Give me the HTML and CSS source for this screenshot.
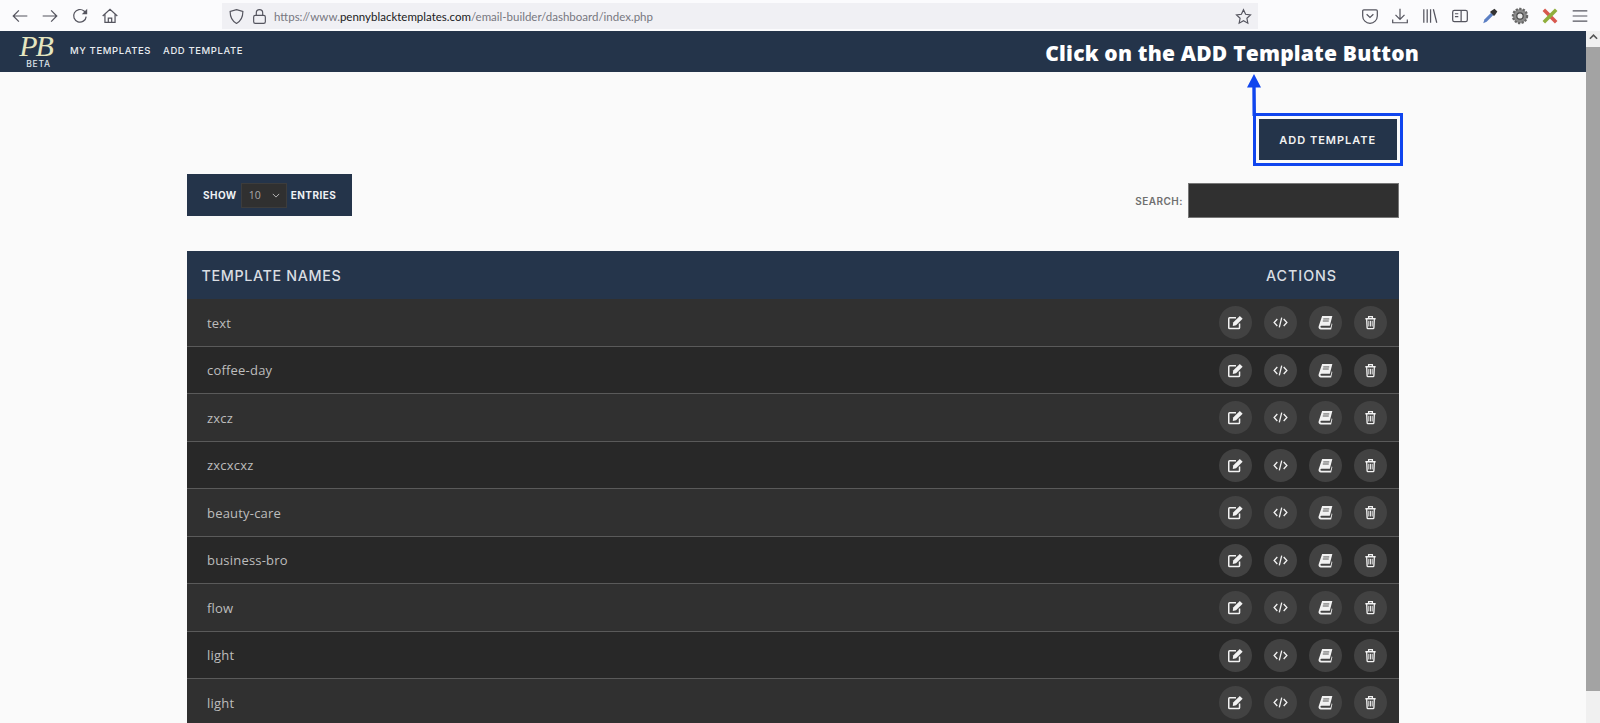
FILE: index.html
```html
<!DOCTYPE html>
<html lang="en">
<head>
<meta charset="utf-8">
<title>Penny Black Templates</title>
<link rel="stylesheet" href="styles.css">
</head>
<body>
<svg class="sprites" aria-hidden="true">
  <symbol id="i-edit" viewBox="0 0 16 16"><path d="M12.300 9V13.500a1 1 0 0 1-1 1H1.800a1 1 0 0 1-1-1V4a1 1 0 0 1 1-1H8.500" fill="none" stroke="currentColor" stroke-width="1.600"/><path d="M5.500 8 12.600 1l3 3-7 7-3.500.6z" fill="currentColor"/></symbol>
  <symbol id="i-code" viewBox="0 0 16 16"><path d="M4.600 4.200 1.200 8l3.400 3.800M11.400 4.200 14.800 8l-3.400 3.800M9.300 2.800 6.700 13.200" fill="none" stroke="currentColor" stroke-width="1.400"/></symbol>
  <symbol id="i-book" viewBox="0 0 16 16"><path d="M4.400 1H15.300L12.600 11.400H3.700a1.100 1.100 0 0 0 0 2.300h9.700l1.300-5 .6 1-1.300 5.800H3.400A2.600 2.600 0 0 1 .8 11.800z" fill="currentColor"/><path d="M5.600 4.200h6.400M5.100 6.400h6.400" stroke="#3f3f3f" stroke-width=".9"/></symbol>
  <symbol id="i-trash" viewBox="0 0 16 16"><path d="M2.500 4h11M6 3.600V1.800h4v1.800M3.900 4.400l.5 9.300a.9.9 0 0 0 .9.800h5.400a.9.9 0 0 0 .9-.8l.5-9.300" fill="none" stroke="currentColor" stroke-width="1.400"/><path d="M6.200 6.200v6M8 6.200v6M9.800 6.200v6" stroke="currentColor" stroke-width="1"/></symbol>
</svg>

<header class="toolbar">
  <div class="tool-group">
    <svg class="tool" viewBox="0 0 16 16"><path d="M14.500 8H2M7 3 2 8l5 5"/></svg>
    <svg class="tool" viewBox="0 0 16 16"><path d="M1.500 8H14M9 3l5 5-5 5"/></svg>
    <svg class="tool" viewBox="0 0 16 16"><path d="M13.500 8.500A5.600 5.600 0 1 1 11.600 3.600L13.500 5.400"/><path class="solid" d="M14.400 1.600v4.800H9.600z"/></svg>
    <svg class="tool" viewBox="0 0 16 16"><path d="M1.500 8 8 2l6.500 6M3.500 6.500v7.200h9V6.500M6.500 13.700V9.800h3v3.900"/></svg>
  </div>
  <div class="urlbar">
    <svg class="tool small" viewBox="0 0 16 16"><path d="M8 1.500 14 3.300c0 5.500-1.800 9-6 11.200-4.200-2.200-6-5.700-6-11.200z"/></svg>
    <svg class="tool small" viewBox="0 0 16 16"><rect x="2.500" y="7" width="11" height="7.500" rx="1.500"/><path d="M5 7V4.500a3 3 0 0 1 6 0V7"/></svg>
    <span class="url">https://www.<b>pennyblacktemplates.com</b>/email-builder/dashboard/index.php</span>
    <svg class="tool star" viewBox="0 0 16 16"><path d="m8 1.600 2 4.300 4.600.6-3.400 3.200.9 4.600L8 12l-4.100 2.300.9-4.600L1.400 6.500 6 5.900z"/></svg>
  </div>
  <div class="tool-group right">
    <svg class="tool" viewBox="0 0 16 16"><path d="M2.500 2.500h11a1 1 0 0 1 1 1V8a6.500 6.500 0 0 1-13 0V3.500a1 1 0 0 1 1-1z"/><path d="M5 6.500 8 9.300l3-2.800"/></svg>
    <svg class="tool" viewBox="0 0 16 16"><path d="M8 1.500v9M4 7l4 4 4-4M1.500 11v3h13v-3"/></svg>
    <svg class="tool" viewBox="0 0 16 16"><path d="M2.500 2v12M5.500 2v12M8.500 2v12M11 2l3 12"/></svg>
    <svg class="tool" viewBox="0 0 16 16"><rect x="1.500" y="3" width="13" height="10" rx="1.500"/><path d="M9 3v10M3.500 6h3M3.500 8.500h3"/></svg>
    <svg class="addon" viewBox="0 0 16 16"><path d="M2 14.500 3 11l6-6 2 2-6 6z" fill="#5b7fc4"/><path d="M9 3.500 12 1.500l2.500 2.500-2 3-1 1L8 4.500z" fill="#333"/></svg>
    <svg class="addon" viewBox="0 0 16 16"><circle cx="8" cy="8" r="6.300" fill="#8a8a8a" stroke="#666" stroke-dasharray="2 1.200" stroke-width="2"/><circle cx="8" cy="8" r="2.800" fill="#e8e8e8" stroke="#444"/></svg>
    <svg class="addon" viewBox="0 0 16 16"><path d="M2.500 2.500 13.500 13.500" stroke="#d8584e" stroke-width="3.200"/><path d="M13.500 2.500 2.500 13.500" stroke="#8fae3c" stroke-width="3.200"/></svg>
    <svg class="tool" viewBox="0 0 16 16"><path d="M1.500 3.500h13M1.500 8h13M1.500 12.500h13"/></svg>
  </div>
</header>

<div class="viewport">
  <div class="page">
    <nav class="nav">
      <div class="brand">
        <span class="brand-mark">PB</span>
        <span class="brand-tag">BETA</span>
      </div>
      <a class="nav-link">MY TEMPLATES</a>
      <a class="nav-link">ADD TEMPLATE</a>
      <h1 class="headline">Click on the ADD Template Button</h1>
    </nav>

    <main class="content">
      <div class="action-row">
        <div class="callout">
          <svg class="callout-arrow" viewBox="0 0 16 42"><path d="M8 0 15 13.500H9.700L10 42H6.500L6.300 13.500H1z"/></svg>
          <button class="add-btn">ADD TEMPLATE</button>
        </div>
      </div>

      <div class="controls">
        <div class="length">
          <span>SHOW</span>
          <span class="select">10<svg class="chev" viewBox="0 0 10 6"><path d="M1 1l4 4 4-4"/></svg></span>
          <span>ENTRIES</span>
        </div>
        <label class="search">SEARCH:<input class="search-input" type="text"></label>
      </div>

      <section class="table">
        <div class="thead">
          <span>TEMPLATE NAMES</span>
          <span class="th-actions">ACTIONS</span>
        </div>

        <div class="row"><span class="name">text</span><div class="actions"><span class="act"><svg><use href="#i-edit"/></svg></span><span class="act"><svg><use href="#i-code"/></svg></span><span class="act"><svg><use href="#i-book"/></svg></span><span class="act"><svg><use href="#i-trash"/></svg></span></div></div>
        <div class="row"><span class="name">coffee-day</span><div class="actions"><span class="act"><svg><use href="#i-edit"/></svg></span><span class="act"><svg><use href="#i-code"/></svg></span><span class="act"><svg><use href="#i-book"/></svg></span><span class="act"><svg><use href="#i-trash"/></svg></span></div></div>
        <div class="row"><span class="name">zxcz</span><div class="actions"><span class="act"><svg><use href="#i-edit"/></svg></span><span class="act"><svg><use href="#i-code"/></svg></span><span class="act"><svg><use href="#i-book"/></svg></span><span class="act"><svg><use href="#i-trash"/></svg></span></div></div>
        <div class="row"><span class="name">zxcxcxz</span><div class="actions"><span class="act"><svg><use href="#i-edit"/></svg></span><span class="act"><svg><use href="#i-code"/></svg></span><span class="act"><svg><use href="#i-book"/></svg></span><span class="act"><svg><use href="#i-trash"/></svg></span></div></div>
        <div class="row"><span class="name">beauty-care</span><div class="actions"><span class="act"><svg><use href="#i-edit"/></svg></span><span class="act"><svg><use href="#i-code"/></svg></span><span class="act"><svg><use href="#i-book"/></svg></span><span class="act"><svg><use href="#i-trash"/></svg></span></div></div>
        <div class="row"><span class="name">business-bro</span><div class="actions"><span class="act"><svg><use href="#i-edit"/></svg></span><span class="act"><svg><use href="#i-code"/></svg></span><span class="act"><svg><use href="#i-book"/></svg></span><span class="act"><svg><use href="#i-trash"/></svg></span></div></div>
        <div class="row"><span class="name">flow</span><div class="actions"><span class="act"><svg><use href="#i-edit"/></svg></span><span class="act"><svg><use href="#i-code"/></svg></span><span class="act"><svg><use href="#i-book"/></svg></span><span class="act"><svg><use href="#i-trash"/></svg></span></div></div>
        <div class="row"><span class="name">light</span><div class="actions"><span class="act"><svg><use href="#i-edit"/></svg></span><span class="act"><svg><use href="#i-code"/></svg></span><span class="act"><svg><use href="#i-book"/></svg></span><span class="act"><svg><use href="#i-trash"/></svg></span></div></div>
        <div class="row"><span class="name">light</span><div class="actions"><span class="act"><svg><use href="#i-edit"/></svg></span><span class="act"><svg><use href="#i-code"/></svg></span><span class="act"><svg><use href="#i-book"/></svg></span><span class="act"><svg><use href="#i-trash"/></svg></span></div></div>
      </section>
    </main>
  </div>
  <div class="scrollbar">
    <svg class="scroll-up" viewBox="0 0 10 6"><path d="M1 5l4-4 4 4"/></svg>
    <div class="thumb"></div>
  </div>
</div>
</body>
</html>
```

FILE: styles.css
```css
* { box-sizing: border-box; }
html, body { margin: 0; height: 723px; overflow: hidden; }
body { background: #fafafa; font-family: "Open Sans", sans-serif; }
.sprites { display: none; }

/* browser chrome */
.toolbar { height: 31px; background: #fbfbfd; display: flex; align-items: center; padding: 3px 0 2px 11px; }
.tool-group { display: flex; align-items: center; gap: 12px; }
.tool-group.right { gap: 12px; margin-left: 103px; }
.tool { width: 18px; height: 18px; fill: none; stroke: #55555f; stroke-width: 1.1; flex: none; }
.tool .solid { fill: #55555f; stroke: none; }
.tool.small { width: 17px; height: 17px; }
.addon { width: 18px; height: 18px; flex: none; }
.urlbar { width: 1036px; height: 26px; margin-left: 103px; background: #f0f0f4; display: flex; align-items: center; gap: 6px; padding: 0 6px; }
.url { font: 11.5px Lato, sans-serif; color: #77777f; flex: 1; white-space: nowrap; }
.url b { font-weight: 400; color: #1a1a22; }
.star { width: 17px; height: 17px; }

/* page */
.viewport { display: flex; height: 692px; }
.page { width: 1586px; flex: none; }
.scrollbar { width: 14px; background: #f0f0f0; display: flex; flex-direction: column; align-items: center; }
.scroll-up { width: 9px; height: 6px; margin-top: 3px; fill: none; stroke: #555; stroke-width: 1.8; flex: none; }
.thumb { width: 14px; height: 644px; margin-top: 7px; background: #a3a3a3; }

.nav { height: 41px; background: #24344a; display: flex; align-items: center; padding: 0 14px; color: #e8e8e8; }
.brand { width: 43px; display: flex; flex-direction: column; align-items: center; margin-right: 13px; }
.brand-mark { font: italic 30px/26px "Liberation Serif", serif; color: #e6e6c0; letter-spacing: -2px; }
.brand-tag { font: 500 8.5px/11px Inter, sans-serif; letter-spacing: 0.8px; color: #dfe3e8; margin-left: 6px; }
.nav-link { font: 500 9.5px Inter, sans-serif; letter-spacing: 0.6px; margin-right: 12px; white-space: nowrap; color: #e8ecf0; position: relative; top: -1px; }
.headline { margin: 0 153px 0 auto; font: 800 21px "Open Sans", sans-serif; letter-spacing: 0.2px; color: #fff; white-space: nowrap; position: relative; top: 1px; }

.content { padding: 0 187px; }
.action-row { display: flex; justify-content: flex-end; padding-top: 41px; margin-right: -4px; }
.callout { position: relative; border: 3.5px solid #0f45ee; padding: 3px; background: #fafafa; }
.callout-arrow { position: absolute; left: -9.5px; bottom: 100%; width: 16px; height: 42px; fill: #0f45ee; }
.add-btn { display: block; width: 138.5px; height: 41px; border: 0; background: #24344a; color: #f2f2f2; font: 600 11px Inter, sans-serif; letter-spacing: 1px; padding: 0; }

.controls { display: flex; justify-content: space-between; align-items: flex-start; margin-top: 8px; }
.length { width: 165px; height: 42px; background: #24344a; color: #eef1f4; display: flex; align-items: center; gap: 4px; padding-left: 16px; font: 700 10px Inter, sans-serif; letter-spacing: 0.45px; }
.select { width: 46px; height: 25px; background: #303030; border: 1px solid #3c3c3c; color: #aaa; font: 400 10.5px "Open Sans", sans-serif; letter-spacing: 0; display: flex; align-items: center; justify-content: space-between; padding: 0 6px 0 7px; }
.chev { width: 8px; height: 5px; fill: none; stroke: #bbb; stroke-width: 1.2; }
.search { display: flex; align-items: center; gap: 5px; margin-top: 9px; font: 600 10px Inter, sans-serif; letter-spacing: 0.5px; color: #6f6f6f; }
.search-input { width: 211px; height: 35px; background: #303030; border: 1px solid #777; padding: 0; }

.table { margin-top: 33px; }
.thead { height: 48px; background: #25354b; color: #d9dde2; display: flex; align-items: center; justify-content: space-between; padding: 0 62px 0 14.5px; font: 500 14.3px Inter, sans-serif; letter-spacing: 0.65px; }
.th-actions { letter-spacing: 0.95px; }
.row { height: 47.5px; background: #303030; border-bottom: 1px solid #5a5a5a; display: flex; align-items: center; justify-content: space-between; padding: 1px 12.5px 0 20px; }
.row:nth-child(odd) { background: #282828; }
.name { color: #bdbdbd; font: 400 13px "Open Sans", sans-serif; letter-spacing: 0.2px; }
.actions { display: flex; gap: 12px; }
.act { width: 33px; height: 33px; border-radius: 50%; background: #424242; color: #f2f2f2; display: flex; align-items: center; justify-content: center; }
.act svg { width: 15px; height: 15px; }
```
